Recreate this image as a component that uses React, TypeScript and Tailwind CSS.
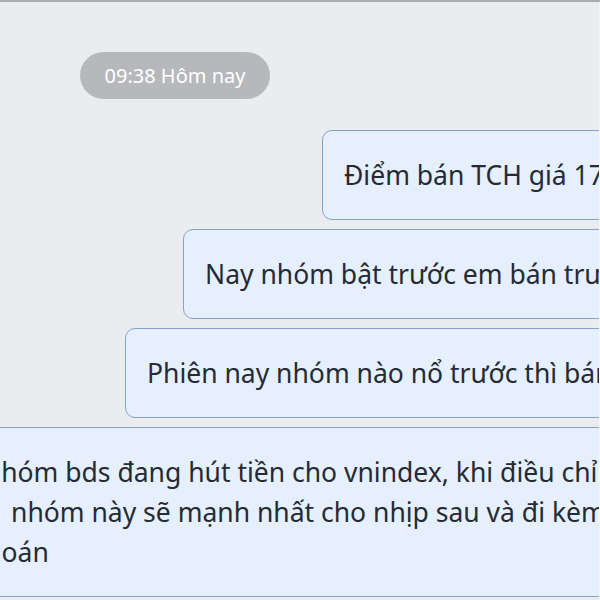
import React from "react";

const font = { fontFamily: '"Noto Sans", "Open Sans", sans-serif' };

function Bubble({ ml, children }: { ml: string; children: React.ReactNode }) {
  return (
    <div
      className={`${ml} w-[900px] shrink-0 rounded-[10px] border border-[#84a2cc] bg-[#e5effd] pl-[21px] py-[24px] text-[26.5px] leading-[40px] text-[#262b33] whitespace-nowrap`}
    >
      {children}
    </div>
  );
}

export default function App() {
  return (
    <div
      className="relative w-[600px] h-[600px] overflow-hidden bg-[#ebecf0] border-t-2 border-[#a9adb2]"
      style={font}
    >
      <div className="flex flex-col">
        <div className="ml-[80px] mt-[50px] flex h-[47px] w-[190px] items-center justify-center rounded-full bg-[#b6b8bb] text-[20px] text-white">
          09:38 Hôm nay
        </div>
        <div className="mt-[31px] flex flex-col gap-[9px]">
          <div className="flex">
            <Bubble ml="ml-[322px]">Điểm bán TCH giá 17.5</Bubble>
          </div>
          <div className="flex">
            <Bubble ml="ml-[183px]">Nay nhóm bật trước em bán trước</Bubble>
          </div>
          <div className="flex">
            <Bubble ml="ml-[125px]">Phiên nay nhóm nào nổ trước thì bán trước</Bubble>
          </div>
          <div className="flex">
            <div className="-ml-[40px] w-[900px] shrink-0 rounded-[10px] border border-[#84a2cc] bg-[#e5effd] pl-[21px] py-[24px] text-[26.5px] leading-[40px] text-[#262b33] whitespace-nowrap">
              <div className="-ml-[1px]">Nhóm bds đang hút tiền cho vnindex, khi điều chỉnh xong</div>
              <div className="ml-[29px]">nhóm này sẽ mạnh nhất cho nhịp sau và đi kèm chứng</div>
              <div className="-ml-[11px]">khoán</div>
            </div>
          </div>
        </div>
      </div>
      <div className="absolute right-0 top-0 h-full w-[1px] bg-[#f4f5f7]" />
    </div>
  );
}
